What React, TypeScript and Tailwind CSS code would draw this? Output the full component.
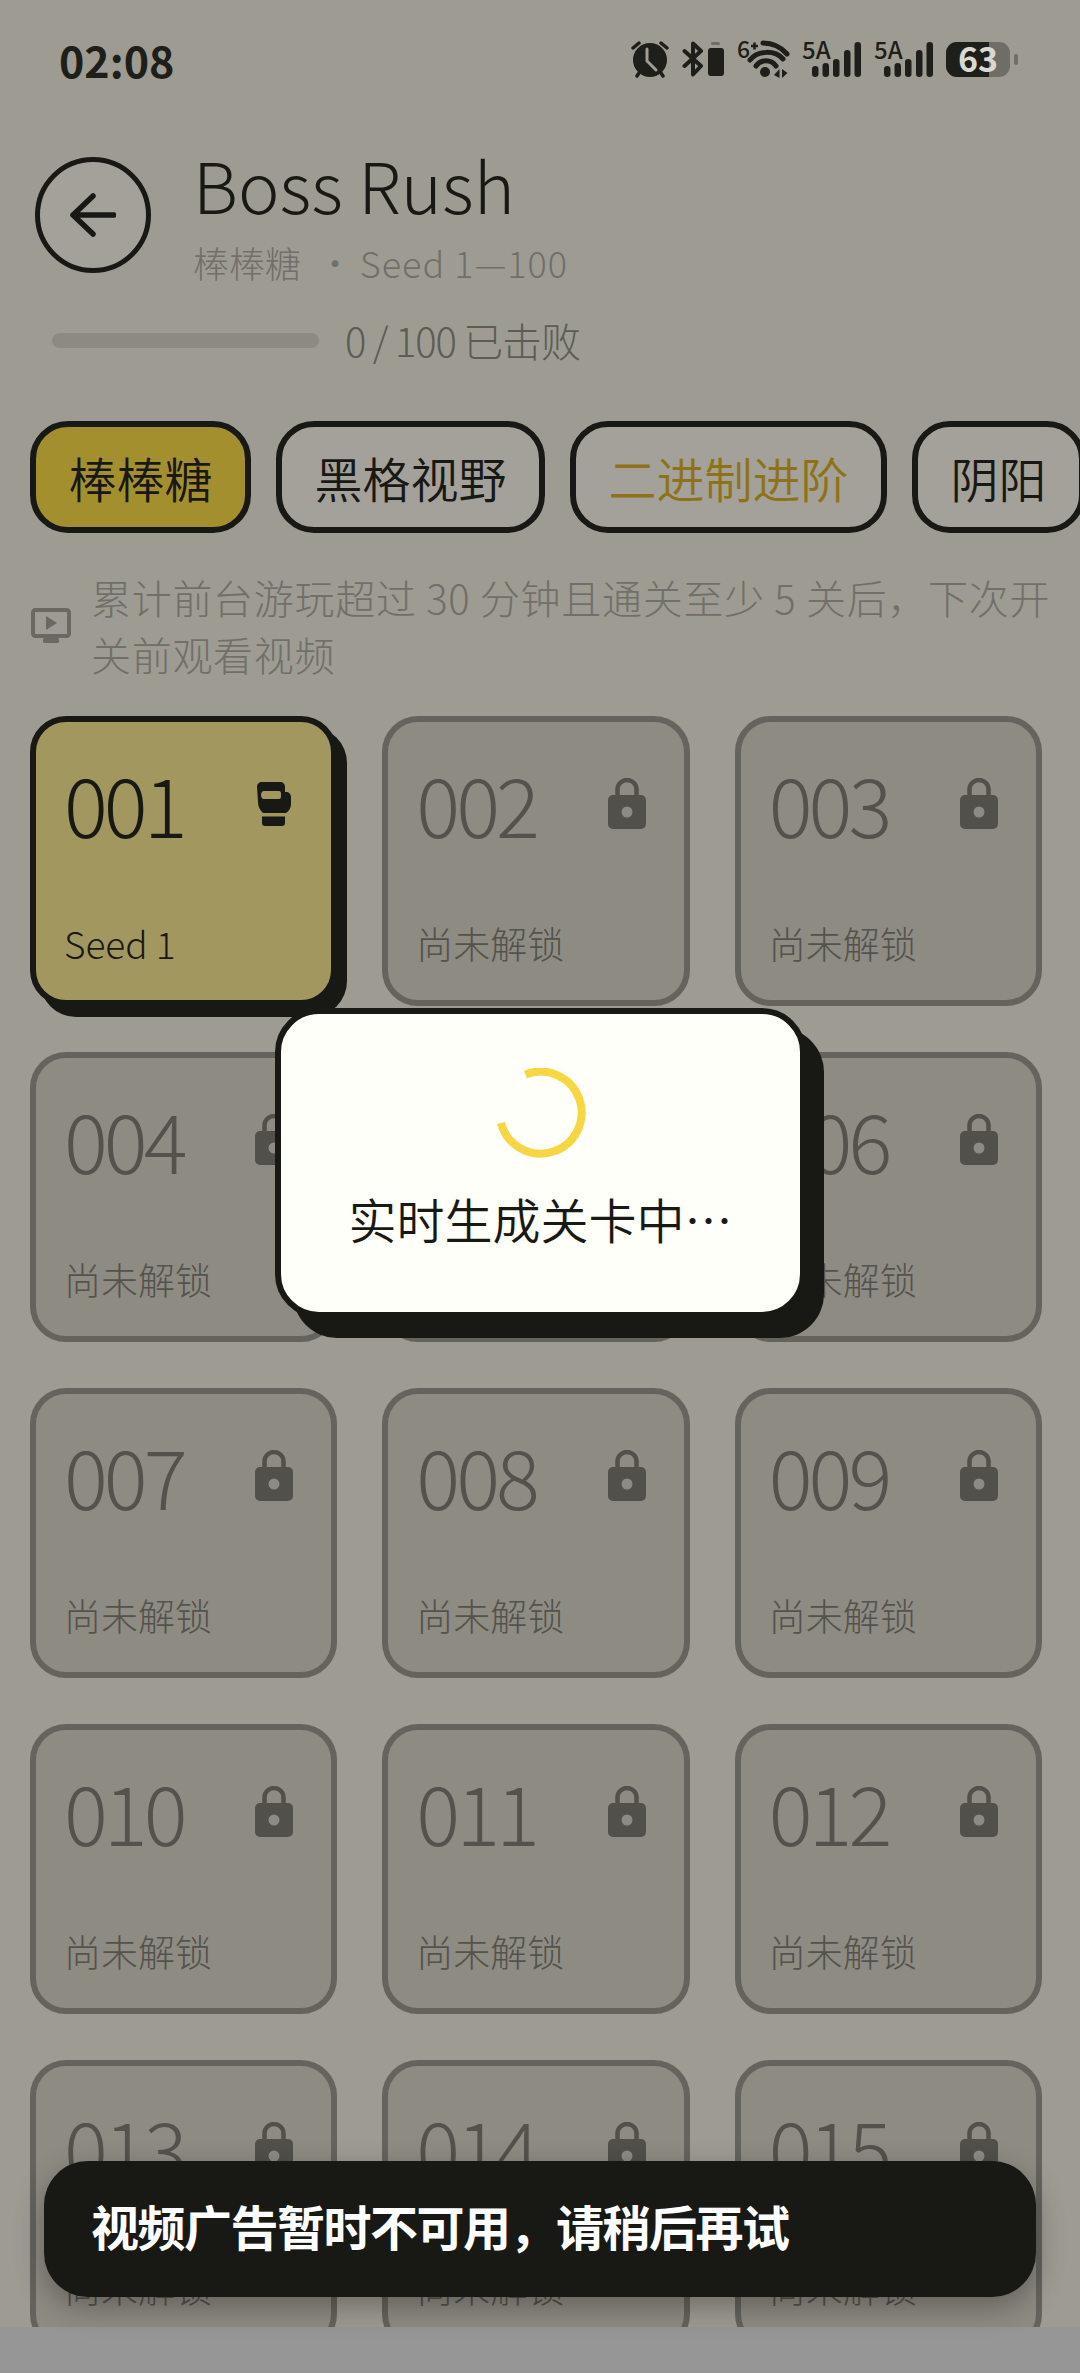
const font = { fontFamily: '"Noto Sans CJK SC", "Noto Sans", sans-serif' };

function Alarm() {
  return (
    <svg width="38" height="38" viewBox="0 0 38 38" className="shrink-0">
      <circle cx="19" cy="20" r="17" fill="#1e1e1a" />
      <path d="M2 8 L8 3 M36 8 L30 3 M6 36 L8 33 M32 36 L30 33" stroke="#1e1e1a" strokeWidth="3.5" strokeLinecap="round" />
      <path d="M16 9 V21 L25 30" stroke="#9f9c95" strokeWidth="3" fill="none" strokeLinecap="round" />
    </svg>
  );
}

function BluetoothBatt() {
  return (
    <svg width="42" height="36" viewBox="0 0 42 36" className="shrink-0">
      <path d="M2.5 10 L19 25 L11 33.5 V2.5 L19 10 L2.5 25" stroke="#1e1e1a" strokeWidth="4" fill="none" strokeLinejoin="round" strokeLinecap="round" />
      <rect x="29" y="1" width="9" height="3" rx="1.5" fill="#6f6d68" />
      <rect x="26" y="7" width="16" height="28" rx="3" fill="#1e1e1a" />
    </svg>
  );
}

function Wifi() {
  return (
    <svg width="52" height="40" viewBox="0 0 52 40" className="shrink-0 overflow-visible">
      <text x="0" y="19" fontSize="23" fontWeight="500" fill="#1e1e1a" style={font}>6</text>
      <path d="M14 7 H21 M17.5 3.5 V10.5" stroke="#1e1e1a" strokeWidth="2.6" />
      <path d="M26 4 C36 4 44 8 50 15" stroke="#1e1e1a" strokeWidth="5" fill="none" strokeLinecap="round" />
      <path d="M13 21 C21 11 38 11 46 20" stroke="#1e1e1a" strokeWidth="5" fill="none" strokeLinecap="round" />
      <path d="M19 27 C24 20 34 20 39 27" stroke="#1e1e1a" strokeWidth="5" fill="none" strokeLinecap="round" />
      <circle cx="28" cy="33" r="5" fill="#1e1e1a" />
      <path d="M37 36 L42.5 30 V39 Z M45 30 V39 L50.5 34 Z" fill="#1e1e1a" />
    </svg>
  );
}

function Signal() {
  return (
    <svg width="59" height="36" viewBox="0 0 59 36" className="shrink-0 overflow-visible">
      <text x="0" y="18" fontSize="24" fontWeight="500" fill="#1e1e1a" style={font}>5A</text>
      <rect x="10" y="25" width="6.5" height="11" rx="3.2" fill="#1e1e1a" />
      <rect x="20.5" y="22" width="6.5" height="14" rx="3.2" fill="#1e1e1a" />
      <rect x="31" y="18" width="6.5" height="18" rx="3.2" fill="#1e1e1a" />
      <rect x="42" y="9" width="6.5" height="27" rx="3.2" fill="#1e1e1a" />
      <rect x="52.5" y="1" width="6.5" height="35" rx="3.2" fill="#1e1e1a" />
    </svg>
  );
}

function Battery() {
  return (
    <svg width="72" height="35" viewBox="0 0 72 35" className="shrink-0 overflow-visible">
      <rect x="0" y="0" width="64" height="35" rx="11" fill="#6f6d68" />
      <path d="M11 0 H43 V35 H11 A11 11 0 0 1 0 24 V11 A11 11 0 0 1 11 0 Z" fill="#1e1e1a" />
      <rect x="68" y="12" width="4" height="11" rx="2" fill="#6f6d68" />
      <text x="32" y="30" textAnchor="middle" fontSize="34" fontWeight="700" fill="#d9d8d2" style={font}>63</text>
    </svg>
  );
}

function Lock() {
  return (
    <svg width="38" height="51" viewBox="0 0 38 51" className="shrink-0">
      <path d="M9.5 20 V11.5 A9.5 9.5 0 0 1 28.5 11.5 V20" stroke="#52504b" strokeWidth="4.5" fill="none" />
      <path fillRule="evenodd" d="M5 17 H33 A5 5 0 0 1 38 22 V46 A5 5 0 0 1 33 51 H5 A5 5 0 0 1 0 46 V22 A5 5 0 0 1 5 17 Z M19 28.5 A5.5 5.5 0 1 0 19 39.5 A5.5 5.5 0 1 0 19 28.5 Z" fill="#52504b" />
    </svg>
  );
}

function Glove() {
  return (
    <svg width="34" height="44" viewBox="0 0 34 44" className="shrink-0">
      <path fillRule="evenodd" d="M5 0 H23 C26 0 28 2 28 5 V10 H29 C32 10 34 12 34 15 V22 C34 26 32 29 29 31 H6 C3 28 1 25 1 20 L0 5 C0 2 2 0 5 0 Z M7 9 C5 9 4 11 4 13 C4 15 5 17 7 17 H22 C24 17 24 15 24 13 C24 11 24 9 22 9 Z" fill="#181814" />
      <path d="M5 34.5 H28 V41 C28 43 27 44 25 44 H8 C6 44 5 43 5 41 Z" fill="#181814" />
    </svg>
  );
}

function Card({ n, active }: { n: string; active?: boolean }) {
  return (
    <div
      className={
        active
          ? "h-[290px] rounded-[36px] border-[6px] border-[#181814] bg-[#a39760] shadow-[10px_11px_0_#181814] flex flex-col justify-between pl-[28px] pr-[40px] pt-[36px] pb-[32px] text-[#181814]"
          : "h-[290px] rounded-[36px] border-[6px] border-[#65635d] bg-[#8e8b83] flex flex-col justify-between pl-[28px] pr-[38px] pt-[36px] pb-[32px] text-[#54524d]"
      }
    >
      <div className="flex items-start justify-between">
        <span className="text-[82px] leading-[90px] font-light tracking-[-4px]">{n}</span>
        <span className={active ? "mt-[24px]" : "mt-[20px]"}>{active ? <Glove /> : <Lock />}</span>
      </div>
      <span className="text-[37px] leading-[50px] font-light">{active ? "Seed 1" : "尚未解锁"}</span>
    </div>
  );
}

const tabs = [
  { t: "棒棒糖", c: "bg-[#a48f2e] text-[#181814]" },
  { t: "黑格视野", c: "bg-[#a3a19a] text-[#181814]" },
  { t: "二进制进阶", c: "bg-[#a3a19a] text-[#8f7218]" },
  { t: "阴阳", c: "bg-[#a3a19a] text-[#181814]" },
];

const cards = Array.from({ length: 15 }, (_, i) => String(i + 1).padStart(3, "0"));

export default function App() {
  return (
    <div className="relative w-[1080px] h-[2373px] overflow-hidden bg-[#969696]" style={font}>
      <div className="h-[2327px] overflow-hidden bg-[#9e9b93]">
        {/* status bar */}
        <div className="flex items-center justify-between h-[118px] pl-[59px] pr-[62px]">
          <span className="text-[43px] font-bold text-[#1e1e1a] leading-none">02:08</span>
          <div className="flex items-center gap-[13px]">
            <Alarm />
            <BluetoothBatt />
            <Wifi />
            <Signal />
            <Signal />
            <Battery />
          </div>
        </div>

        {/* header */}
        <div className="flex items-start pl-[35px] pt-[39px]">
          <div className="w-[116px] h-[116px] rounded-full border-[5px] border-[#181814] bg-[#a3a19a] flex items-center justify-center shrink-0">
            <svg width="46" height="44" viewBox="0 0 46 44">
              <path d="M44 22 H3 M23 3 L3 22 L23 41" stroke="#181814" strokeWidth="5.5" fill="none" strokeLinecap="round" strokeLinejoin="round" />
            </svg>
          </div>
          <div className="ml-[42px] -mt-[13px]">
            <div className="text-[70px] leading-[80px] font-light text-[#181814]">Boss Rush</div>
            <div className="mt-[13px] text-[36px] leading-[50px] font-light text-[#716f69] whitespace-pre">
              棒棒糖  ·  <span className="-ml-[9px] tracking-[1px]">Seed 1—100</span>
            </div>
          </div>
        </div>

        {/* progress */}
        <div className="flex items-center pl-[52px] mt-[23px] h-[60px]">
          <div className="w-[267px] h-[15px] rounded-full bg-[#8d8a82]" />
          <span className="ml-[26px] text-[40px] font-light tracking-[-1.2px] text-[#5d5b56]">0 / 100 已击败</span>
        </div>

        {/* tabs */}
        <div className="flex gap-[25px] pl-[30px] mt-[51px] overflow-hidden">
          {tabs.map((x) => (
            <div key={x.t} className={"h-[112px] shrink-0 rounded-[38px] border-[6px] border-[#181814] px-[32.5px] flex items-center text-[48px] font-[350] whitespace-nowrap " + x.c}>
              {x.t}
            </div>
          ))}
        </div>

        {/* hint */}
        <div className="flex items-center pl-[31px] pr-[16px] mt-[36px]">
          <svg width="40" height="36" viewBox="0 0 40 36" className="shrink-0">
            <rect x="2" y="2" width="36" height="26" rx="2.5" stroke="#6a6863" strokeWidth="4" fill="none" />
            <path d="M15 8 L26 15 L15 22 Z" fill="#6a6863" />
            <rect x="12" y="30" width="16" height="5" rx="1.5" fill="#6a6863" />
          </svg>
          <div className="ml-[20px] text-[40px] leading-[57px] font-light tracking-[0.7px] text-[#716f69]">
            累计前台游玩超过 30 分钟且通关至少 5 关后，下次开关前观看视频
          </div>
        </div>

        {/* grid */}
        <div className="grid grid-cols-3 gap-x-[45px] gap-y-[46px] pl-[30px] pr-[38px] mt-[33px]">
          {cards.map((n, i) => (
            <Card key={n} n={n} active={i === 0} />
          ))}
        </div>
      </div>

      {/* loading dialog */}
      <div className="absolute left-[275px] top-[1008px] w-[531px] h-[310px] rounded-[44px] border-[6px] border-[#181814] bg-[#fffffa] shadow-[18px_20px_0_#181814] flex flex-col items-center text-[#181814]">
        <svg width="90" height="90" viewBox="0 0 90 90" className="mt-[54px] shrink-0">
          <path d="M29.5 6.5 A41 41 0 1 1 5 55" stroke="#f6d743" strokeWidth="8" fill="none" />
        </svg>
        <span className="mt-[28px] text-[48px] leading-[64px] font-[350] whitespace-nowrap">实时生成关卡中…</span>
      </div>

      {/* toast */}
      <div className="absolute left-[44px] top-[2161px] w-[992px] h-[136px] rounded-[44px] bg-[#181814] shadow-[0_10px_30px_rgba(0,0,0,0.3)] flex items-center pl-[47px] pb-[8px]">
        <span className="text-[48px] font-bold text-white leading-none tracking-[-1.5px]">视频广告暂时不可用，请稍后再试</span>
      </div>
    </div>
  );
}
